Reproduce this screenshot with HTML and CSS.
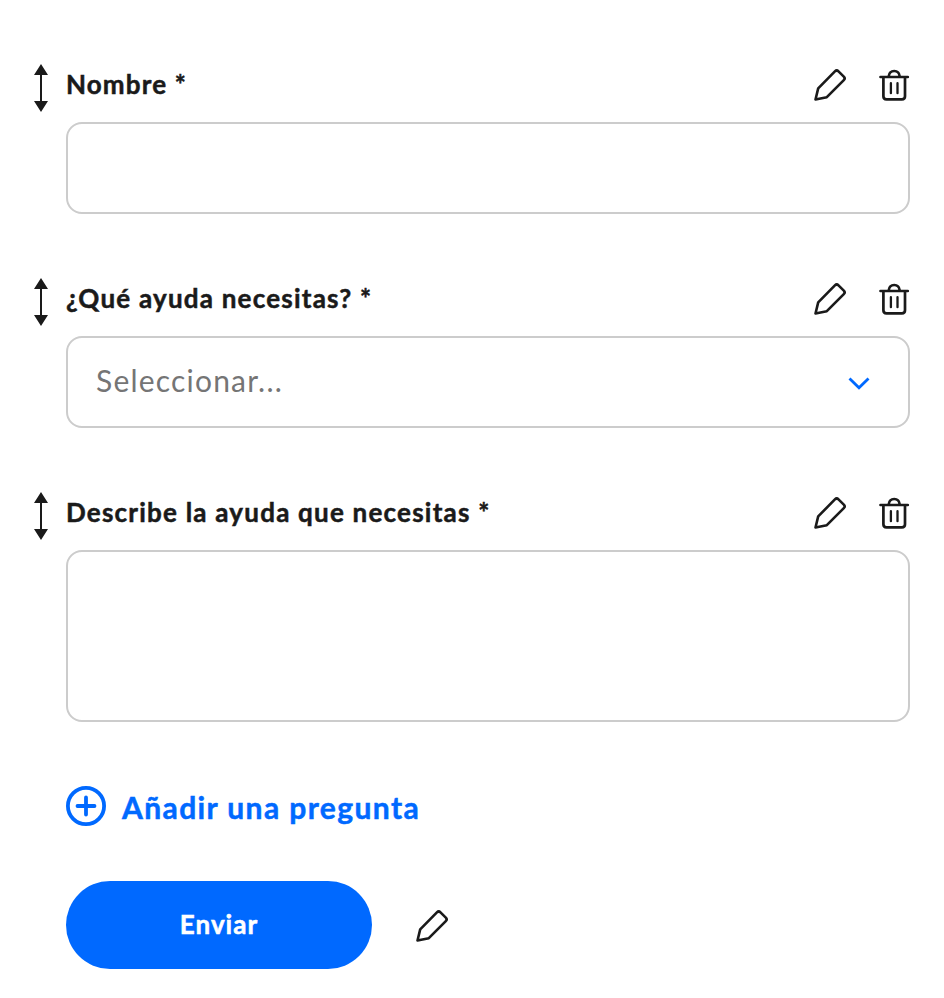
FILE: index.html
```html
<!DOCTYPE html>
<html lang="es">
<head>
    <meta charset="UTF-8">
    <meta name="viewport" content="width=device-width, initial-scale=1.0">
    <title>Formulario</title>
    <link rel="stylesheet" href="styles.css">
</head>
<body>

<!-- Shared icons -->
<svg class="sprite" width="0" height="0">
    <symbol id="drag" viewBox="0 0 14 48">
        <path d="M7 10V38" stroke="currentColor" stroke-width="2"/>
        <path d="M7 0L14 11H0ZM7 48L14 37H0Z" fill="currentColor"/>
    </symbol>
    <symbol id="pencil" viewBox="0 0 36 36">
        <path d="M3.5 32.5L6.2 21.4L22.9 4.4Q24.7 2.6 26.5 4.4L31.8 9.6Q33.6 11.4 31.8 13.2L14.8 30.2Z" fill="none" stroke="currentColor" stroke-width="2.6" stroke-linejoin="round"/>
    </symbol>
    <symbol id="trash" viewBox="0 0 32 36">
        <path d="M2.5 10H29.8M5.4 10V29.3Q5.4 32.4 8.5 32.4H23.9Q27 32.4 27 29.3V10M10.7 10V9.4Q11.3 4 16.2 4Q21.1 4 21.7 9.4V10" fill="none" stroke="currentColor" stroke-width="2.7" stroke-linecap="round"/>
        <path d="M12.9 16.2V26.2M19.5 16.2V26.2" fill="none" stroke="currentColor" stroke-width="2.3" stroke-linecap="round"/>
    </symbol>
</svg>

<form class="form" id="helpForm">
    <div class="question">
        <svg class="drag"><use href="#drag"/></svg>
        <label class="label label-short" for="nombre">Nombre *</label>
        <div class="actions">
            <svg class="pencil"><use href="#pencil"/></svg>
            <svg class="trash"><use href="#trash"/></svg>
        </div>
        <input class="field" type="text" id="nombre">
    </div>

    <div class="question">
        <svg class="drag"><use href="#drag"/></svg>
        <label class="label">¿Qué ayuda necesitas? *</label>
        <div class="actions">
            <svg class="pencil"><use href="#pencil"/></svg>
            <svg class="trash"><use href="#trash"/></svg>
        </div>
        <div class="field select">
            <span class="placeholder">Seleccionar...</span>
            <svg class="chevron" viewBox="0 0 22 14"><path d="M1.5 2.5L11 11.8L20.5 2.5"/></svg>
        </div>
    </div>

    <div class="question">
        <svg class="drag"><use href="#drag"/></svg>
        <label class="label" for="descripcion">Describe la ayuda que necesitas *</label>
        <div class="actions">
            <svg class="pencil"><use href="#pencil"/></svg>
            <svg class="trash"><use href="#trash"/></svg>
        </div>
        <textarea class="field textarea" id="descripcion"></textarea>
    </div>

    <div class="add">
        <svg class="plus" viewBox="0 0 40 40"><circle cx="20" cy="20" r="18.1"/><path d="M20 11.5V28.5M11.5 20H28.5"/></svg>
        <span class="add-text">Añadir una pregunta</span>
    </div>

    <div class="submit-row">
        <button class="submit" type="submit">Enviar</button>
        <svg class="pencil"><use href="#pencil"/></svg>
    </div>
</form>

</body>
</html>
```

FILE: styles.css
```css
* {
    box-sizing: border-box;
}
body {
    margin: 0;
    background-color: #fff;
    color: #1a1a1a;
    font-family: Lato, sans-serif;
}
svg {
    display: block;
    flex: none;
}
.sprite {
    display: none;
}
.form {
    padding: 64px 34px 0;
}
.question {
    display: grid;
    grid-template-columns: 32px 1fr auto;
    grid-template-rows: 58px auto;
    margin-bottom: 64px;
}
.drag {
    width: 14px;
    height: 48px;
}
.label {
    font-size: 26px;
    font-weight: 700;
    line-height: 40px;
    letter-spacing: 1.22px;
    white-space: nowrap;
    -webkit-text-stroke: 0.5px;
}
.label-short {
    letter-spacing: 1.15px;
}
.actions {
    display: flex;
    gap: 30px;
    padding-top: 3px;
}
.pencil {
    width: 36px;
    height: 36px;
}
.trash {
    width: 32px;
    height: 36px;
}
.field {
    display: block;
    grid-column: 2 / 4;
    width: 100%;
    height: 92px;
    margin: 0;
    padding: 0 28px;
    border: 2px solid #ccc;
    border-radius: 16px;
    background-color: #fff;
    font: 30px Lato, sans-serif;
    resize: none;
}
.select {
    display: flex;
    align-items: center;
    justify-content: space-between;
    padding-right: 38px;
}
.placeholder {
    color: #757575;
    letter-spacing: 1.2px;
    padding-bottom: 5px;
}
.chevron {
    width: 22px;
    height: 14px;
    margin-top: 2px;
    fill: none;
    stroke: #0069ff;
    stroke-width: 2.8;
}
.textarea {
    height: 172px;
}
.add {
    display: flex;
    align-items: center;
    gap: 16px;
    height: 40px;
    margin-left: 32px;
    color: #0069ff;
    font-size: 30px;
    font-weight: 700;
    letter-spacing: 1.4px;
}
.add-text {
    padding-top: 2px;
    -webkit-text-stroke: 0.5px;
}
.plus {
    width: 40px;
    height: 40px;
    fill: none;
    stroke: #0069ff;
    stroke-width: 3.8;
    stroke-linecap: round;
}
.submit-row {
    display: flex;
    align-items: center;
    gap: 42px;
    margin: 55px 0 0 32px;
}
.submit-row .pencil {
    margin-top: 2px;
}
.submit {
    width: 306px;
    height: 88px;
    padding: 0 0 2px;
    border: none;
    border-radius: 44px;
    background-color: #0069ff;
    color: #fff;
    font: 700 26px Lato, sans-serif;
    letter-spacing: 1px;
    -webkit-text-stroke: 0.5px;
    cursor: pointer;
}
```
